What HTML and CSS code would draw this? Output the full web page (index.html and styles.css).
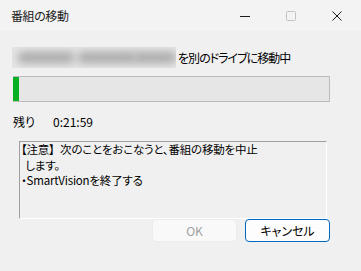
FILE: index.html
```html
<!DOCTYPE html>
<html lang="ja">
<head>
<meta charset="utf-8">
<title>番組の移動</title>
<link rel="stylesheet" href="styles.css">
</head>
<body>
<div class="window">
  <div class="titlebar">
    <span class="title">番組の移動</span>
    <div class="caption">
      <div class="cbtn"><svg width="10" height="10" viewBox="0 0 10 10"><path d="M0 5.5H10" stroke="#1b1b1b" stroke-width="1"/></svg></div>
      <div class="cbtn"><svg width="10" height="10" viewBox="0 0 10 10"><rect x="0.5" y="0.5" width="9" height="9" rx="1" fill="none" stroke="#c4c4c4" stroke-width="1"/></svg></div>
      <div class="cbtn"><svg width="10" height="10" viewBox="0 0 10 10"><path d="M0.5 0.5L9.5 9.5M9.5 0.5L0.5 9.5" stroke="#1b1b1b" stroke-width="1"/></svg></div>
    </div>
  </div>
  <div class="content">
    <div class="status">
      <div class="redacted"><span class="blob b1"></span><span class="blob b2"></span><span class="blob b3"></span></div>
      <span class="status-text">を別のドライブに移動中</span>
    </div>
    <div class="progress"><div class="fill" style="width:6px"></div></div>
    <div class="remain"><span class="label">残り</span><span class="time">0:21:59</span></div>
    <div class="note"><span class="tag">【注意】</span> 次のことをおこなうと、番組の移動を中止<br><span class="indent">&nbsp;します。</span><br>・SmartVisionを終了する</div>
    <div class="buttons">
      <button class="btn ok" disabled>OK</button>
      <button class="btn cancel">キャンセル</button>
    </div>
  </div>
</div>
</body>
</html>
```
FILE: styles.css
```css
* { box-sizing: border-box; }
html, body { margin: 0; padding: 0; }
body {
  width: 361px;
  height: 271px;
  overflow: hidden;
  background: #f0f0f0;
  font-family: "Noto Sans CJK JP", "Noto Sans", sans-serif;
  font-feature-settings: "palt";
  font-size: 12px;
  color: #000;
}
.window { width: 361px; height: 271px; }
.titlebar {
  height: 31px;
  background: #f3f3f3;
  display: flex;
  align-items: center;
  padding-left: 11px;
  padding-right: 1px;
}
.title { flex: 1; font-size: 12px; color: #1b1b1b; line-height: 16px; padding-top: 1px; letter-spacing: -0.4px; }
.caption { display: flex; height: 31px; }
.cbtn {
  width: 46px;
  height: 31px;
  display: flex;
  align-items: center;
  justify-content: center;
}
.cbtn svg { display: block; }
.content { padding: 0 31px 0 13px; }
.status {
  margin-top: 16px;
  height: 21px;
  display: flex;
  align-items: center;
  margin-left: -1px;
}
.redacted {
  width: 164px;
  height: 21px;
  background: #e6e6e6;
  position: relative;
  overflow: hidden;
  margin-right: 2px;
}
.blob {
  position: absolute;
  top: 5px;
  height: 11px;
  background: #a8a8a8;
  filter: blur(4px);
  border-radius: 4px;
}
.b1 { left: 6px; width: 56px; }
.b2 { left: 66px; width: 58px; }
.b3 { left: 122px; width: 42px; }
.status-text { line-height: 16px; letter-spacing: -1px; }
.progress {
  margin-top: 8px;
  height: 26px;
  border: 1px solid #bcbcbc;
  background: #e6e6e6;
}
.fill { height: 100%; margin-left: -1px; background: #06b025; }
.remain {
  margin-top: 12px;
  height: 16px;
  line-height: 16px;
  display: flex;
}
.remain .label { width: 40px; }
.note {
  margin: 11px 3px 0 6px;
  height: 78px;
  border-top: 1px solid #a0a0a0;
  border-left: 1px solid #a0a0a0;
  border-bottom: 1px solid #ffffff;
  border-right: 1px solid #ffffff;
  padding: 0 0 0 1px;
  line-height: 15.5px;
  font-size: 11.5px;
  letter-spacing: -0.2px;
}
.tag { margin-right: 3px; }
.indent { padding-left: 2px; }
.buttons {
  display: flex;
  justify-content: flex-end;
  gap: 8px;
}
.btn {
  width: 85px;
  height: 23px;
  border-radius: 4px;
  font-family: inherit;
  font-feature-settings: "palt";
  font-size: 12px;
  padding: 0;
}
.ok {
  background: #f9f9f9;
  border: 1px solid #ececec;
  color: #a0a0a0;
}
.cancel {
  background: #fdfdfd;
  border: 1px solid #0067c0;
  color: #000;
}
```
